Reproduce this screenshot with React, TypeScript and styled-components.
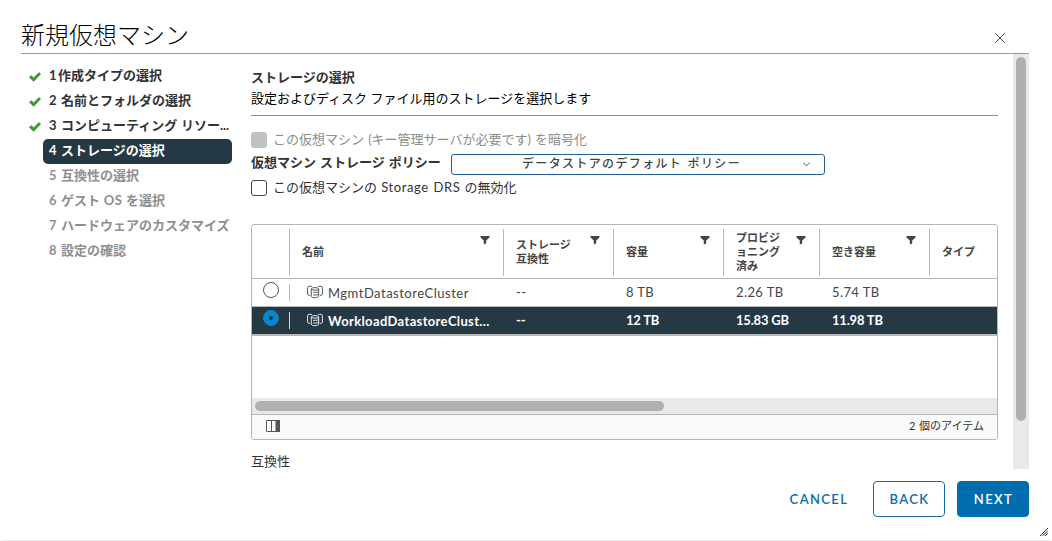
import React from 'react';
import styled, { createGlobalStyle, css } from 'styled-components';

const Global = createGlobalStyle`
  * { box-sizing: border-box; }
  html, body { margin: 0; background: #fff; overflow: hidden; }
  body {
    font-family: Lato, 'Noto Sans CJK JP', sans-serif;
    font-size: 13px;
    line-height: 18px;
    color: #333;
  }
  button { font-family: inherit; margin: 0; padding: 0; cursor: pointer; }
`;

const Dialog = styled.div`
  position: relative;
  display: flex;
  flex-direction: column;
  width: 1052px;
  height: 541px;
  padding: 0 23px 0 21px;
  background: #fff;
  border-bottom: 1px solid #ececec;
  border-radius: 3px;
`;

const Header = styled.header`
  flex: none;
  display: flex;
  justify-content: space-between;
  height: 54px;
  border-bottom: 1px solid #9a9a9a;
`;

const Title = styled.h1`
  margin: 0;
  padding-top: 17px;
  font-size: 24px;
  line-height: 36px;
  font-weight: 300;
  color: #000;
`;

const CloseButton = styled.button`
  align-self: flex-start;
  display: flex;
  margin: 33px 24px 0 0;
  border: 0;
  background: none;
`;

const Body = styled.div`
  display: flex;
  height: 415px;
`;

const Steps = styled.ol`
  flex: none;
  list-style: none;
  width: 211px;
  margin: 0;
  padding: 10px 0 0;
`;

const Step = styled.li`
  display: flex;
  align-items: center;
  height: 25px;
`;

const StepMark = styled.span`
  flex: none;
  display: flex;
  width: 22px;
  padding: 0 0 0 8px;
`;

const StepLabel = styled.span<{ $state: 'done' | 'current' | 'todo' }>`
  flex: 1;
  height: 25px;
  padding: 0 0 0 6px;
  line-height: 22px;
  font-weight: 700;
  white-space: pre;
  word-spacing: 0.5px;
  border-radius: 5px;
  color: ${p => ({ done: '#333', current: '#fff', todo: '#8f8f8f' })[p.$state]};
  ${p => p.$state === 'current' && css`background: #253945;`}
`;

const StepNumber = styled.span<{ $narrow?: boolean }>`
  display: inline-block;
  width: ${p => (p.$narrow ? '9px' : '12px')};
`;

const Content = styled.main`
  flex: none;
  width: 747px;
  margin-left: 19px;
  overflow: hidden;
`;

const PageHead = styled.div`
  height: 62px;
  padding-top: 13px;
  border-bottom: 1px solid #8c8c8c;
`;

const PageTitle = styled.h2`
  margin: 0;
  font-size: 13px;
  line-height: 21px;
  font-weight: 700;
`;

const PageHint = styled.p`
  margin: 0;
  line-height: 21px;
  color: #000;
`;

const Options = styled.div`
  height: 108px;
  padding-top: 12px;
`;

const OptionRow = styled.label<{ $muted?: boolean }>`
  display: flex;
  align-items: center;
  gap: 6px;
  height: 24px;
  line-height: 20px;
  color: ${p => (p.$muted ? '#8c8c8c' : '#333')};
`;

const OptionText = styled.span`
  padding-bottom: 2px;
  white-space: pre;
  word-spacing: 0.8px;
`;

const Checkbox = styled.span<{ $disabled?: boolean }>`
  width: 16px;
  height: 16px;
  border-radius: 3px;
  border: 1px solid ${p => (p.$disabled ? '#c1c1c1' : '#444')};
  background: ${p => (p.$disabled ? '#c1c1c1' : '#fff')};
`;

const Latin = styled.span<{ $track: number }>`
  letter-spacing: ${p => p.$track}px;
`;

const PolicyRow = styled.div`
  display: flex;
  align-items: center;
  height: 24px;
`;

const PolicyLabel = styled.span`
  width: 200px;
  font-weight: 700;
  padding-bottom: 4px;
  word-spacing: 0.8px;
`;

const Select = styled.button`
  display: flex;
  align-items: center;
  width: 374px;
  height: 21px;
  padding: 0 14px 0 70px;
  justify-content: space-between;
  border: 1px solid #1f618a;
  border-radius: 3px;
  background: #fff;
  color: #444;
  font-size: 12px;
  line-height: 18px;
  font-weight: 500;
  letter-spacing: 1.35px;
  word-spacing: 1px;
`;

const DataGrid = styled.section`
  display: flex;
  flex-direction: column;
  height: 216px;
  border: 1px solid #b5b5b5;
  border-radius: 3px;
  background: #fff;
  overflow: hidden;
`;

const columns = css`
  display: grid;
  grid-template-columns: 38px 214px 110px 110px 96px 110px 1fr;
`;

const GridHead = styled.div`
  ${columns}
  flex: none;
  height: 54px;
  padding: 4px 0 2px;
  border-bottom: 1px solid #b9b9b9;
`;

const HeadCell = styled.div`
  display: flex;
  justify-content: space-between;
  align-items: center;
  padding: 0 13px 1px 12px;
  border-right: 1px solid #b9b9b9;
  font-size: 11px;
  line-height: 14px;
  font-weight: 700;
  white-space: pre;
  color: #444;
  &:last-child { border-right: 0; }
  svg { align-self: flex-start; margin-top: 7px; }
`;

const GridRow = styled.div<{ $selected?: boolean }>`
  ${columns}
  flex: none;
  height: 28px;
  border-bottom: ${p => (p.$selected ? 2 : 1)}px solid #b9b9b9;
  color: #454545;
  ${p => p.$selected && css`
    height: 29px;
    background: #253945;
    color: #fff;
    font-weight: 700;
  `}
`;

const RadioCell = styled.div<{ $selected?: boolean }>`
  display: flex;
  justify-content: center;
  height: 17px;
  margin-top: 5px;
  border-right: 1px solid ${p => (p.$selected ? '#cfd6da' : '#b9b9b9')};
`;

const Radio = styled.span<{ $checked?: boolean }>`
  display: flex;
  align-items: center;
  justify-content: center;
  width: 16px;
  height: 16px;
  margin-top: -2px;
  border-radius: 50%;
  border: 1px solid ${p => (p.$checked ? '#0b86c8' : '#555')};
  background: ${p => (p.$checked ? '#0b86c8' : '#fff')};
  &::after {
    content: '';
    width: 4px;
    height: 4px;
    border-radius: 50%;
    background: ${p => (p.$checked ? '#173a50' : 'transparent')};
  }
`;

const NameCell = styled.div`
  display: flex;
  gap: 5px;
  padding: 6px 0 0 17px;
  line-height: 17px;
  white-space: nowrap;
`;

const ValueCell = styled.div`
  padding: 5px 0 0 12px;
  line-height: 17px;
  white-space: pre;
`;

const EmptyArea = styled.div`
  flex: 1;
`;

const HScroll = styled.div`
  flex: none;
  height: 16px;
  padding: 3px;
  background: #e9e9e9;
`;

const HThumb = styled.div`
  width: 409px;
  height: 10px;
  border-radius: 5px;
  background: #b0b0b0;
`;

const GridFoot = styled.div`
  flex: none;
  display: flex;
  align-items: center;
  justify-content: space-between;
  height: 25px;
  padding: 0 13px 2px 14px;
  border-top: 1px solid #b5b5b5;
  background: #fafafa;
  font-size: 11px;
  line-height: 18px;
  word-spacing: 1px;
`;

const Compat = styled.div`
  padding-top: 11px;
  line-height: 20px;
`;

const VScroll = styled.div`
  flex: none;
  width: 16px;
  margin-left: auto;
  padding: 3px;
  background: #e9e9e9;
`;

const VThumb = styled.div`
  width: 10px;
  height: 364px;
  border-radius: 5px;
  background: #b0b0b0;
`;

const Actions = styled.footer`
  display: flex;
  justify-content: flex-end;
  gap: 12px;
  padding-top: 12px;
`;

const Button = styled.button<{ $kind: 'link' | 'outline' | 'solid' }>`
  height: 36px;
  min-width: 72px;
  border: 1px solid ${p => (p.$kind === 'link' ? 'transparent' : p.$kind === 'solid' ? '#006dae' : '#1f6a9c')};
  border-radius: 4px;
  background: ${p => (p.$kind === 'solid' ? '#006dae' : 'transparent')};
  color: ${p => (p.$kind === 'solid' ? '#fff' : '#0a6ca8')};
  font-size: 13px;
  line-height: 16px;
  font-weight: 600;
  letter-spacing: 1.4px;
  padding: 0 0 0 1px;
  ${p => p.$kind === 'link' && css`width: 85px;`}
`;

const Grip = styled.svg`
  position: absolute;
  right: 4px;
  bottom: 4px;
`;

const Check = () => (
  <svg width="12" height="10" viewBox="0 0 12 10">
    <path d="M.3 5.3 2.2 3.5 4.6 5.7 10 .5 11.7 1.9 4.7 9.4Z" fill="#3d9e2f" stroke="#2f8424" strokeWidth=".5" />
  </svg>
);

const Filter = () => (
  <svg width="10" height="9" viewBox="0 0 10 9">
    <path d="M.5 0h9v1.4L6.2 4.6V7.4L3.8 8.6V4.6L.5 1.4Z" fill="#444" />
  </svg>
);

const ClusterIcon = () => (
  <svg width="16" height="14" viewBox="0 0 16 14" fill="none" stroke="currentColor" strokeWidth=".9">
    <path d="M5 1.500C2.800.9.600 1.500.600 2.400v6.800c0 .8 1 1.200 2.300 1.300M11 1.500c2.200-.6 4.400 0 4.400.9v6.800c0 .8-1 1.200-2.300 1.300" />
    <path d="M4.300 4v7.300c0 .8 1.600 1.400 3.700 1.400s3.700-.6 3.700-1.400V4" />
    <ellipse cx="8" cy="3.900" rx="3.700" ry="1.300" />
    <path d="M6 7.200c1.200.3 3.500.2 5.500-.4M6 9.900c1.200.3 3.500.2 5.500-.4" />
  </svg>
);

const ColumnsIcon = () => (
  <svg width="14" height="12" viewBox="0 0 14 12">
    <rect x=".5" y=".5" width="13" height="11" rx=".5" fill="#fff" stroke="#555" />
    <path d="M5.500 0v12" stroke="#555" />
    <path d="M9.500 0h4.500v12h-4.500z" fill="#555" />
  </svg>
);

const steps: { label: React.ReactNode; state: 'done' | 'current' | 'todo' }[] = [
  { label: '作成タイプの選択', state: 'done' },
  { label: '名前とフォルダの選択', state: 'done' },
  { label: 'コンピューティング リソー...', state: 'done' },
  { label: 'ストレージの選択', state: 'current' },
  { label: '互換性の選択', state: 'todo' },
  { label: <>ゲスト <Latin $track={0.5}>OS</Latin> を選択</>, state: 'todo' },
  { label: 'ハードウェアのカスタマイズ', state: 'todo' },
  { label: '設定の確認', state: 'todo' },
];

const heads = ['名前', 'ストレージ\n互換性', '容量', 'プロビジ\nョニング\n済み', '空き容量', 'タイプ'];

const rows = [
  { name: 'MgmtDatastoreCluster', values: ['--', '8 TB', '2.26 TB', '5.74 TB'], selected: false },
  { name: 'WorkloadDatastoreClust...', values: ['--', '12 TB', '15.83 GB', '11.98 TB'], selected: true },
];

export default function App() {
  return (
    <Dialog>
      <Global />
      <Header>
        <Title>新規仮想マシン</Title>
        <CloseButton aria-label="close">
          <svg width="10" height="10" viewBox="0 0 10 10" stroke="#444" strokeWidth="1">
            <path d="M.3.3l9.400 9.400M9.700.3.3 9.700" />
          </svg>
        </CloseButton>
      </Header>
      <Body>
        <Steps>
          {steps.map((s, i) => (
            <Step key={i}>
              <StepMark>{s.state === 'done' && <Check />}</StepMark>
              <StepLabel $state={s.state}>
                <StepNumber $narrow={i === 0}>{i + 1}</StepNumber>
                {s.label}
              </StepLabel>
            </Step>
          ))}
        </Steps>
        <Content>
          <PageHead>
            <PageTitle>ストレージの選択</PageTitle>
            <PageHint>設定およびディスク ファイル用のストレージを選択します</PageHint>
          </PageHead>
          <Options>
            <OptionRow $muted>
              <Checkbox $disabled />
              <OptionText>この仮想マシン (キー管理サーバが必要です) を暗号化</OptionText>
            </OptionRow>
            <PolicyRow>
              <PolicyLabel>仮想マシン ストレージ ポリシー</PolicyLabel>
              <Select>
                データストアのデフォルト ポリシー
                <svg width="7" height="5" viewBox="0 0 7 5" fill="none" stroke="#555">
                  <path d="M.4.700 3.500 3.900 6.600.700" />
                </svg>
              </Select>
            </PolicyRow>
            <OptionRow>
              <Checkbox />
              <OptionText>この仮想マシンの <Latin $track={0.6}>Storage DRS</Latin> の無効化</OptionText>
            </OptionRow>
          </Options>
          <DataGrid>
            <GridHead>
              <HeadCell />
              {heads.map((h, i) => (
                <HeadCell key={h}>
                  {h}
                  {i < 5 && <Filter />}
                </HeadCell>
              ))}
            </GridHead>
            {rows.map(r => (
              <GridRow key={r.name} $selected={r.selected}>
                <RadioCell $selected={r.selected}>
                  <Radio $checked={r.selected} />
                </RadioCell>
                <NameCell>
                  <ClusterIcon />
                  <Latin $track={r.selected ? 0.35 : 0.5}>{r.name}</Latin>
                </NameCell>
                {r.values.map((v, i) => (
                  <ValueCell key={i}>
                    <Latin $track={r.selected ? -0.2 : 0.4}>{v}</Latin>
                  </ValueCell>
                ))}
              </GridRow>
            ))}
            <EmptyArea />
            <HScroll><HThumb /></HScroll>
            <GridFoot>
              <ColumnsIcon />
              <span>2 個のアイテム</span>
            </GridFoot>
          </DataGrid>
          <Compat>互換性</Compat>
        </Content>
        <VScroll><VThumb /></VScroll>
      </Body>
      <Actions>
        <Button $kind="link">CANCEL</Button>
        <Button $kind="outline">BACK</Button>
        <Button $kind="solid">NEXT</Button>
      </Actions>
      <Grip width="8" height="8" viewBox="0 0 8 8" stroke="#333">
        <path d="M0 8 8 0M2.500 8 8 2.500M5 8 8 5" />
      </Grip>
    </Dialog>
  );
}
